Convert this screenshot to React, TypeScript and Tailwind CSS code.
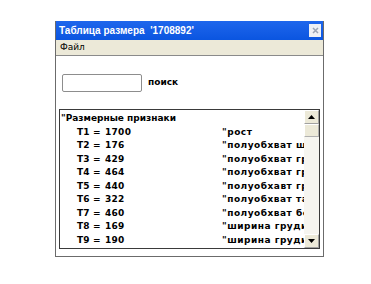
import React from 'react';

const rows = [
  { t: 'T1', v: '1700', c: '"рост' },
  { t: 'T2', v: '176', c: '"полуобхват шеи' },
  { t: 'T3', v: '429', c: '"полуобхват груди' },
  { t: 'T4', v: '464', c: '"полуобхват груди' },
  { t: 'T5', v: '440', c: '"полуобхавт груди' },
  { t: 'T6', v: '322', c: '"полуобхват талии' },
  { t: 'T7', v: '460', c: '"полуобхват бедер' },
  { t: 'T8', v: '169', c: '"ширина груди' },
  { t: 'T9', v: '190', c: '"ширина груди' },
];

const Arrow: React.FC<{ up?: boolean }> = ({ up }) => (
  <div className="w-[15px] h-[14px] shrink-0 bg-[#ece9d8] border border-t-white border-l-white border-r-[#a0a0a0] border-b-[#a0a0a0] flex items-center justify-center">
    <svg width="7" height="4" viewBox="0 0 7 4">
      <path d={up ? 'M3.5 0 L7 4 L0 4 Z' : 'M0 0 L7 0 L3.5 4 Z'} fill="#000" />
    </svg>
  </div>
);

const App: React.FC = () => {
  return (
    <div className="w-[371px] h-[284px] bg-white pt-[21px] pl-[55px]" style={{ fontFamily: '"DejaVu Sans", sans-serif' }}>
      <div className="w-[269px] h-[236px] border-l border-r border-b border-[#6b6b6b] flex flex-col">
        <div className="h-[19px] bg-gradient-to-b from-[#1e66ec] to-[#0a55e0] flex items-center justify-between pl-[3px] pr-[2px]">
          <span className="text-white font-bold text-[10px] whitespace-pre font-['Liberation_Sans',sans-serif]">Таблица размера  '1708892'</span>
          <div className="w-[12px] h-[13px] bg-[#eef0f4] flex items-center justify-center">
            <svg width="7" height="7" viewBox="0 0 7 7">
              <path d="M1 1 L6 6 M6 1 L1 6" stroke="#9aa3b4" strokeWidth="1.5" />
            </svg>
          </div>
        </div>
        <div className="h-[16px] bg-[#ece9d8] border-b border-[#8a8a8a] flex items-center pl-[4px]">
          <span className="text-[9px] text-black">Файл</span>
        </div>
        <div className="flex-1 bg-white">
          <div className="flex items-center mt-[18px] ml-[6px]">
            <div className="w-[80px] h-[18px] border border-[#8d8d8d] rounded-[2px] bg-white" />
            <span className="ml-[6px] text-[9px] font-bold text-black">поиск</span>
          </div>
          <div className="mt-[17px] ml-[3px] w-[261px] h-[140px] border border-[#3a3a3a] flex overflow-hidden">
            <div className="flex-1 min-w-0 overflow-hidden pt-[2px] pl-[1px] text-[9px] font-bold text-black leading-[13.5px] whitespace-pre">
              <div>"Размерные признаки</div>
              {rows.map((r) => (
                <div key={r.t} className="flex">
                  <span className="shrink-0 ml-[16px] w-[16px]">{r.t}</span>
                  <span className="shrink-0 w-[12px]">=</span>
                  <span className="shrink-0 w-[117px] tracking-[0.3px]">{r.v}</span>
                  <span className="shrink-0 tracking-[0.5px]">{r.c}</span>
                </div>
              ))}
            </div>
            <div className="w-[15px] shrink-0 bg-[#f6f5f0] flex flex-col">
              <Arrow up />
              <div className="h-[13px] shrink-0 bg-[#ece9d8] border border-t-white border-l-white border-r-[#b0b0b0] border-b-[#b0b0b0]" />
              <div className="flex-1" />
              <Arrow />
            </div>
          </div>
        </div>
      </div>
    </div>
  );
};

export default App;
